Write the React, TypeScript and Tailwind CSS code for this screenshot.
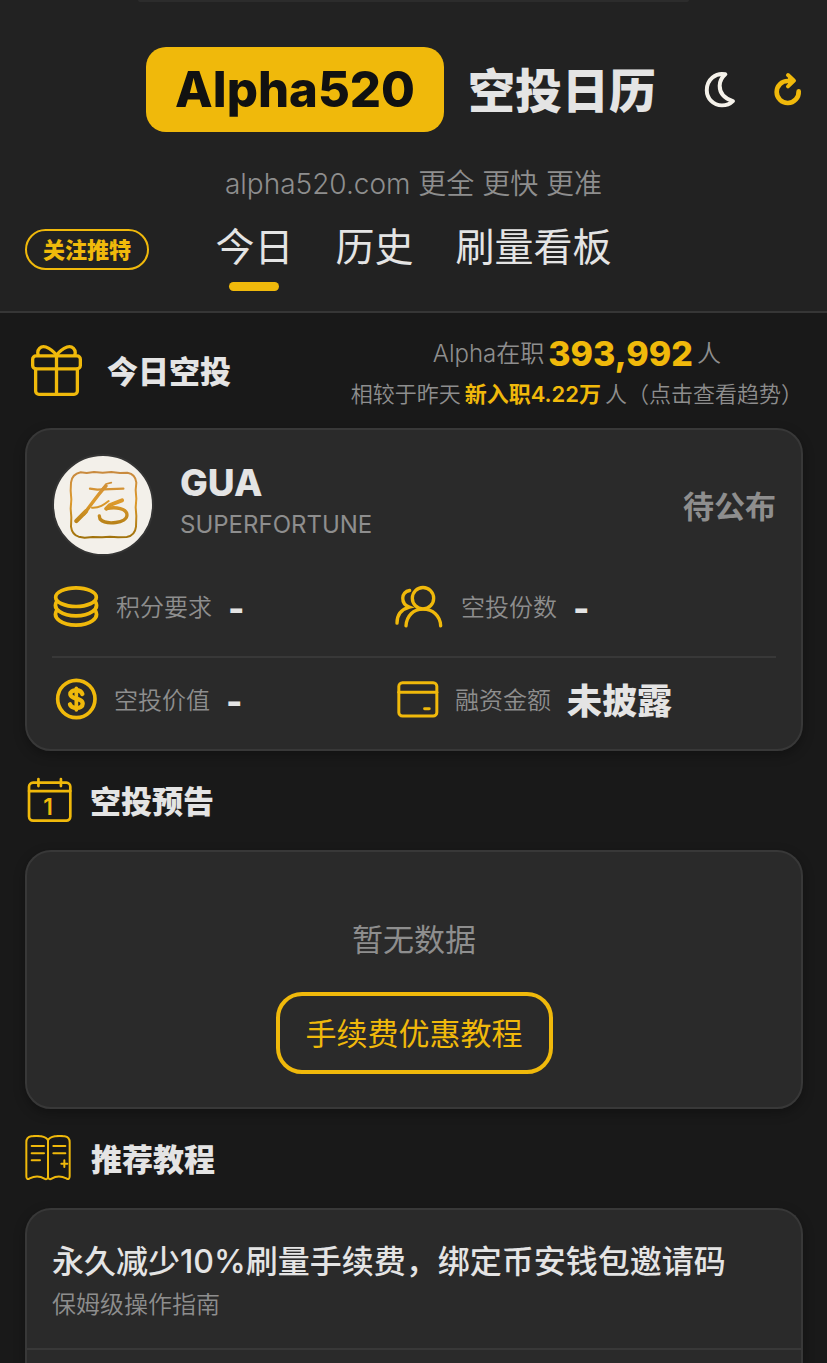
import React, { useState } from 'react';

const TABS = ['今日', '历史', '刷量看板'];

const MoonIcon: React.FC = () => (
  <svg viewBox="0 0 96 112" className="w-8 h-[37px]" fill="none" stroke="currentColor" strokeWidth="12" strokeLinejoin="round">
    <path d="M64 10C35 4 8 26 8 58c0 25 20 46 46 46c14 0 25-5 33-13c-24-7-40-22-40-46c0-16 8-27 17-35Z" />
  </svg>
);

const RefreshIcon: React.FC = () => (
  <svg viewBox="0 0 96 108" className="w-8 h-9" fill="none" stroke="currentColor" strokeWidth="14" strokeLinecap="round" strokeLinejoin="round">
    <path d="M80 58A33 33 0 1 1 48 27" />
    <path d="M48 9L66 26L48 43" strokeWidth="12" fill="currentColor" />
  </svg>
);

const GiftIcon: React.FC = () => (
  <svg viewBox="0 0 160 160" className="w-[53px] h-[53px]" fill="none" stroke="currentColor" strokeWidth="10" strokeLinecap="round">
    <rect x="8" y="36" width="144" height="39" rx="10" />
    <path d="M17 75V142a10 10 0 0 0 10 10H133a10 10 0 0 0 10-10V75" />
    <path d="M80 36V152" />
    <path d="M25 34C19 17 33 4 48 9C62 14 72 23 80 34C88 23 98 14 112 9C127 4 141 17 135 34" />
  </svg>
);

const CoinsIcon: React.FC = () => (
  <svg viewBox="0 0 144 134" className="w-12 h-[45px]" fill="none" stroke="currentColor" strokeWidth="11" strokeLinecap="round">
    <ellipse cx="72" cy="39" rx="61" ry="28" />
    <path d="M13 54C2 74 30 95 72 95S142 74 131 54" />
    <path d="M13 81C2 102 30 123 72 123S142 102 131 81" />
  </svg>
);

const PeopleIcon: React.FC = () => (
  <svg viewBox="0 0 150 134" className="w-[50px] h-[45px]" fill="none" stroke="currentColor" strokeWidth="10" strokeLinecap="round">
    <circle cx="84" cy="42" r="32" />
    <path d="M33 125C35 95 55 75 84 75S136 95 137 125" />
    <path d="M44 19C17 23 16 59 43 69C17 76 6 94 6 117" />
  </svg>
);

const DollarIcon: React.FC = () => (
  <svg viewBox="0 0 138 132" className="w-[46px] h-11" fill="none" stroke="currentColor" strokeWidth="11" strokeLinecap="round">
    <circle cx="73" cy="66" r="56" />
    <path d="M73 34V99" />
    <path d="M91 51C86 36 55 36 55 52C55 69 92 61 92 80C92 97 58 96 54 82" strokeWidth="13" />
  </svg>
);

const WalletIcon: React.FC = () => (
  <svg viewBox="0 0 132 118" className="w-11 h-[39px]" fill="none" stroke="currentColor" strokeWidth="9" strokeLinecap="round">
    <rect x="11" y="8" width="115" height="101" rx="11" />
    <path d="M11 37H126" />
    <path d="M89 87H103" />
  </svg>
);

const CalendarIcon: React.FC = () => (
  <svg viewBox="0 0 140 140" className="w-[47px] h-[47px]" fill="none" stroke="currentColor" strokeWidth="8" strokeLinecap="round">
    <rect x="12" y="17" width="123" height="113" rx="12" />
    <path d="M12 42H135M40 6V27M107 6V27" />
    <text x="69" y="112" textAnchor="middle" fill="currentColor" stroke="none" fontFamily="Inter" fontSize="68" fontWeight="600">1</text>
  </svg>
);

const BookIcon: React.FC = () => (
  <svg viewBox="0 0 144 144" className="w-12 h-12" fill="none" stroke="currentColor" strokeWidth="6" strokeLinecap="round" strokeLinejoin="round">
    <path d="M69 16C63 3 37 1 19 4C7 6 4 12 4 22V124C4 132 8 134 14 130C28 123 46 123 58 131C64 135 69 132 69 124Z" />
    <path d="M69 16C75 3 101 1 119 4C131 6 134 12 134 22V124C134 132 130 134 124 130C110 123 92 123 80 131C74 135 69 132 69 124Z" />
    <path d="M20 33H57M20 55H57M20 76H45M85 33H121M85 55H121M109 86H127M118 76V96" />
  </svg>
);

const TokenLogo: React.FC = () => (
  <svg viewBox="0 0 294 294" className="w-[102px] h-[102px] rounded-full border-2 border-[#343434] bg-[#f3f0ea]" fill="none" strokeLinecap="round" strokeLinejoin="round">
    <defs>
      <linearGradient id="ink" x1="0" y1="50" x2="0" y2="246" gradientUnits="userSpaceOnUse">
        <stop offset="0" stopColor="#c98a3e" />
        <stop offset="0.45" stopColor="#dd9a2c" />
        <stop offset="1" stopColor="#a0720c" />
      </linearGradient>
    </defs>
    <g stroke="url(#ink)">
      <path strokeWidth="6" d="M80 49L98 51L120 48L146 50L172 48L198 51L220 50Q245 54 247 80L245 102L247 128L245 154L247 180L246 212Q243 239 218 243L192 244L168 242L144 244L116 243L92 245L74 242Q54 236 51 212L52 184L50 158L52 130L50 104L51 80Q54 54 80 49Z" />
      <path strokeWidth="7" d="M108 98L130 101L208 98" />
      <path strokeWidth="5" d="M172 80L156 84L144 99" />
      <path strokeWidth="10" d="M156 90C136 110 112 145 90 174" />
      <path strokeWidth="13" d="M96 166L67 195" />
      <path strokeWidth="6" d="M114 155C138 156 150 146 164 135" />
      <path strokeWidth="12" d="M204 133L168 147L157 158" />
      <path strokeWidth="10" d="M157 158C186 151 219 158 219 177C219 202 156 208 138 189L136 180" />
    </g>
  </svg>
);

interface StatProps {
  icon: React.ReactNode;
  label: string;
  value: string;
}

const Stat: React.FC<StatProps> = ({ icon, label, value }) => (
  <div className="flex items-center gap-4">
    <span className="text-[#f0b90b]">{icon}</span>
    <span className="pt-1 text-2xl font-[350] text-[#8e8e8e]">{label}</span>
    <span className="pt-1 text-[35px] leading-10 font-extrabold">{value}</span>
  </div>
);

interface SectionTitleProps {
  icon: React.ReactNode;
  title: string;
}

const SectionTitle: React.FC<SectionTitleProps> = ({ icon, title }) => (
  <div className="flex h-[99px] items-center gap-[18px]">
    <span className="text-[#f0b90b]">{icon}</span>
    <h2 className="pt-1 text-[31px] font-extrabold">{title}</h2>
  </div>
);

export default function App() {
  const [activeTab, setActiveTab] = useState('今日');

  return (
    <div className="flex min-h-screen flex-col bg-[#191919] font-['Inter','Noto_Sans_CJK_SC',sans-serif] text-[#e4e4e4]">
      <header className="border-b-2 border-[#363636] bg-[#222222]">
        <div className="mx-auto h-[2px] w-2/3 rounded-b-full bg-[#2c2c2c]" />
        <div className="mt-[45px] flex items-center justify-end pr-[23px]">
          <h1 className="flex items-center gap-6 text-[47px] font-extrabold">
            <span className="flex h-[85px] items-center rounded-[20px] bg-[#f0b90b] px-[29px] text-[49px] text-[#111111]">
              Alpha520
            </span>
            <span className="pt-1">空投日历</span>
          </h1>
          <button type="button" aria-label="深色模式" className="ml-12 text-[#f5f2ea]">
            <MoonIcon />
          </button>
          <button type="button" aria-label="刷新" className="ml-9 text-[#f0b90b]">
            <RefreshIcon />
          </button>
        </div>
        <p className="mt-8 text-center text-[28px] leading-10 font-[350] text-[#8e8e8e]">alpha520.com 更全 更快 更准</p>
        <div className="mt-5 grid grid-cols-[1fr_auto_1fr] items-start px-[25px]">
          <a
            href="#twitter"
            className="mt-[5px] flex h-[41px] w-[124px] items-center justify-center rounded-full border-2 border-[#f0b90b] pt-0.5 text-[22px] font-extrabold text-[#f0b90b]"
          >
            关注推特
          </a>
          <nav className="flex gap-[42px]">
            {TABS.map((tab) => (
              <button
                key={tab}
                type="button"
                onClick={() => setActiveTab(tab)}
                className="flex h-[87px] flex-col items-center text-[39px] leading-[46px]"
              >
                {tab}
                {activeTab === tab && <span className="mt-3 h-[9px] w-[50px] rounded-full bg-[#f0b90b]" />}
              </button>
            ))}
          </nav>
        </div>
      </header>

      <main className="flex flex-1 flex-col pr-6 pl-[25px]">
        <div className="flex h-[115px] items-center justify-between pl-[5px]">
          <div className="flex items-center gap-6 text-[#f0b90b]">
            <GiftIcon />
            <h2 className="pt-1 text-[31px] font-extrabold text-[#e4e4e4]">今日空投</h2>
          </div>
          <a href="#trend" className="pt-1.5 text-[22px] leading-10 font-[350] text-[#8e8e8e]">
            <div className="flex items-center justify-center gap-1 text-2xl leading-10">
              Alpha在职
              <strong className="text-[34px] leading-10 font-extrabold text-[#f0b90b]">393,992</strong>
              <span>人</span>
            </div>
            <div className="flex justify-center gap-1">
              相较于昨天
              <strong className="font-semibold text-[#f0b90b]">新入职4.22万</strong>
              人（点击查看趋势）
            </div>
          </a>
        </div>

        <section className="rounded-[26px] border-2 border-[#383838] bg-[#2a2a2a] px-[25px] pt-6 pb-[9px] shadow-[0_4px_12px_rgba(0,0,0,0.3)]">
          <div className="flex items-center">
            <TokenLogo />
            <div className="ml-[26px] flex-1 pb-1">
              <h3 className="text-[37px] leading-[44px] font-extrabold">GUA</h3>
              <p className="text-2xl leading-10 text-[#8e8e8e]">SUPERFORTUNE</p>
            </div>
            <span className="pt-1 text-[31px] font-semibold text-[#8e8e8e]">待公布</span>
          </div>
          <div className="grid h-[102px] grid-cols-[9fr_10fr] border-b-2 border-[#383838]">
            <Stat icon={<CoinsIcon />} label="积分要求" value="-" />
            <Stat icon={<PeopleIcon />} label="空投份数" value="-" />
          </div>
          <div className="grid h-[82px] grid-cols-[9fr_10fr]">
            <Stat icon={<DollarIcon />} label="空投价值" value="-" />
            <Stat icon={<WalletIcon />} label="融资金额" value="未披露" />
          </div>
        </section>

        <SectionTitle icon={<CalendarIcon />} title="空投预告" />
        <section className="flex flex-col items-center rounded-[26px] border-2 border-[#383838] bg-[#2a2a2a] pt-16 pb-[33px] shadow-[0_4px_12px_rgba(0,0,0,0.3)]">
          <p className="text-[31px] leading-[48px] text-[#8e8e8e]">暂无数据</p>
          <button type="button" className="mt-7 h-[82px] rounded-[26px] border-4 border-[#f0b90b] px-[26px] pt-0.5 text-[31px] text-[#f0b90b]">
            手续费优惠教程
          </button>
        </section>

        <SectionTitle icon={<BookIcon />} title="推荐教程" />
        <section className="flex-1 rounded-t-[26px] border-2 border-b-0 border-[#383838] bg-[#2a2a2a] shadow-[0_4px_12px_rgba(0,0,0,0.3)]">
          <a href="#guide" className="block border-b-2 border-[#383838] px-[25px] pt-[29px] pb-[23px]">
            <h3 className="text-[32px] leading-[46px] font-medium">永久减少10%刷量手续费，绑定币安钱包邀请码</h3>
            <p className="text-2xl leading-10 font-[350] text-[#8e8e8e]">保姆级操作指南</p>
          </a>
        </section>
      </main>
    </div>
  );
}
